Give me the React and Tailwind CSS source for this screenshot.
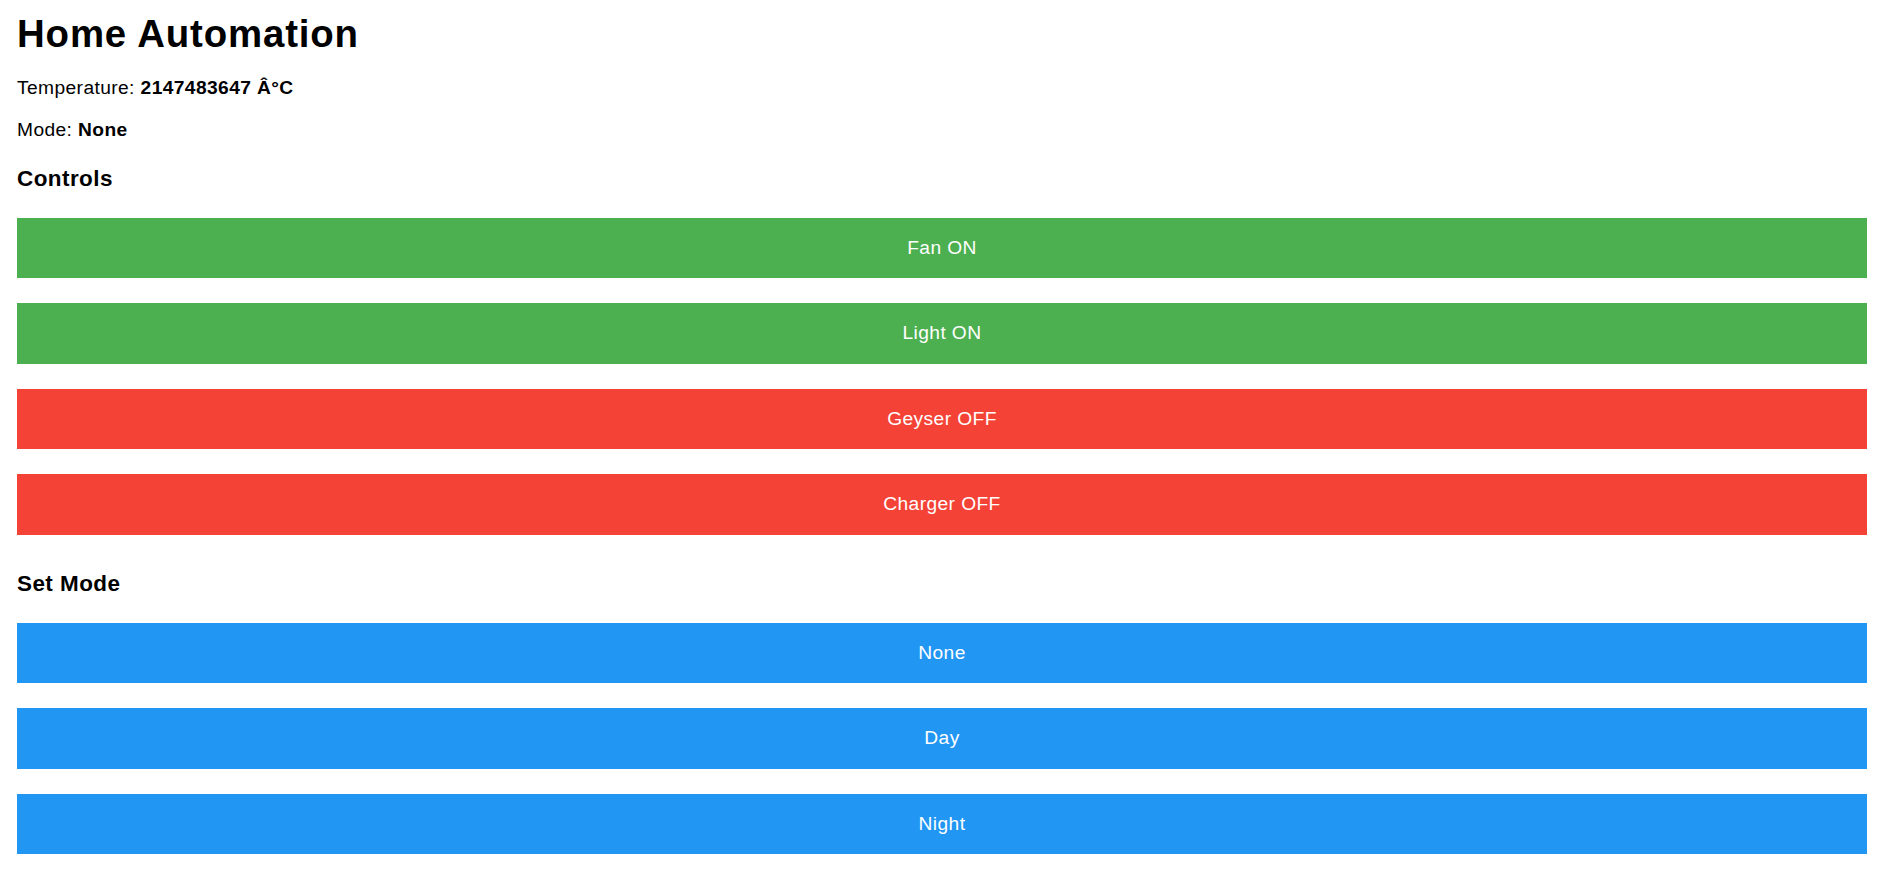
export default function App() {
  const controls = [
    { label: "Fan ON", cls: "bg-[#4caf50]" },
    { label: "Light ON", cls: "bg-[#4caf50]" },
    { label: "Geyser OFF", cls: "bg-[#f44336]" },
    { label: "Charger OFF", cls: "bg-[#f44336]" },
  ];
  const modes = ["None", "Day", "Night"];
  return (
    <div className="min-h-screen bg-white text-black pl-[17px] pb-[20px]" style={{ fontFamily: '"Liberation Sans", Arial, sans-serif' }}>
      <div className="w-[1850px] flex flex-col">
        <h1 className="mt-[12px] text-[38.4px] leading-[44px] font-bold tracking-[0.85px]">Home Automation</h1>
        <p className="mt-[20.8px] text-[19.2px] leading-[22px] tracking-[0.4px]">
          Temperature: <b className="font-bold">2147483647 Â°C</b>
        </p>
        <p className="mt-[20.6px] text-[19.2px] leading-[22px] tracking-[0.4px]">
          Mode: <b className="font-bold">None</b>
        </p>
        <h3 className="mt-[24.9px] text-[22.46px] leading-[26px] font-bold tracking-[0.45px]">Controls</h3>
        <div className="mt-[25.7px] flex flex-col gap-[25px]">
          {controls.map((c) => (
            <button key={c.label} className={`${c.cls} h-[60.5px] w-full flex items-center justify-center text-white text-[19.2px] leading-normal tracking-[0.4px]`}>
              {c.label}
            </button>
          ))}
        </div>
        <h3 className="mt-[36.3px] text-[22.46px] leading-[26px] font-bold tracking-[0.45px]">Set Mode</h3>
        <div className="mt-[25.7px] flex flex-col gap-[25px]">
          {modes.map((m) => (
            <button key={m} className="bg-[#2196f3] h-[60.5px] w-full flex items-center justify-center text-white text-[19.2px] leading-normal tracking-[0.4px]">
              {m}
            </button>
          ))}
        </div>
      </div>
    </div>
  );
}
